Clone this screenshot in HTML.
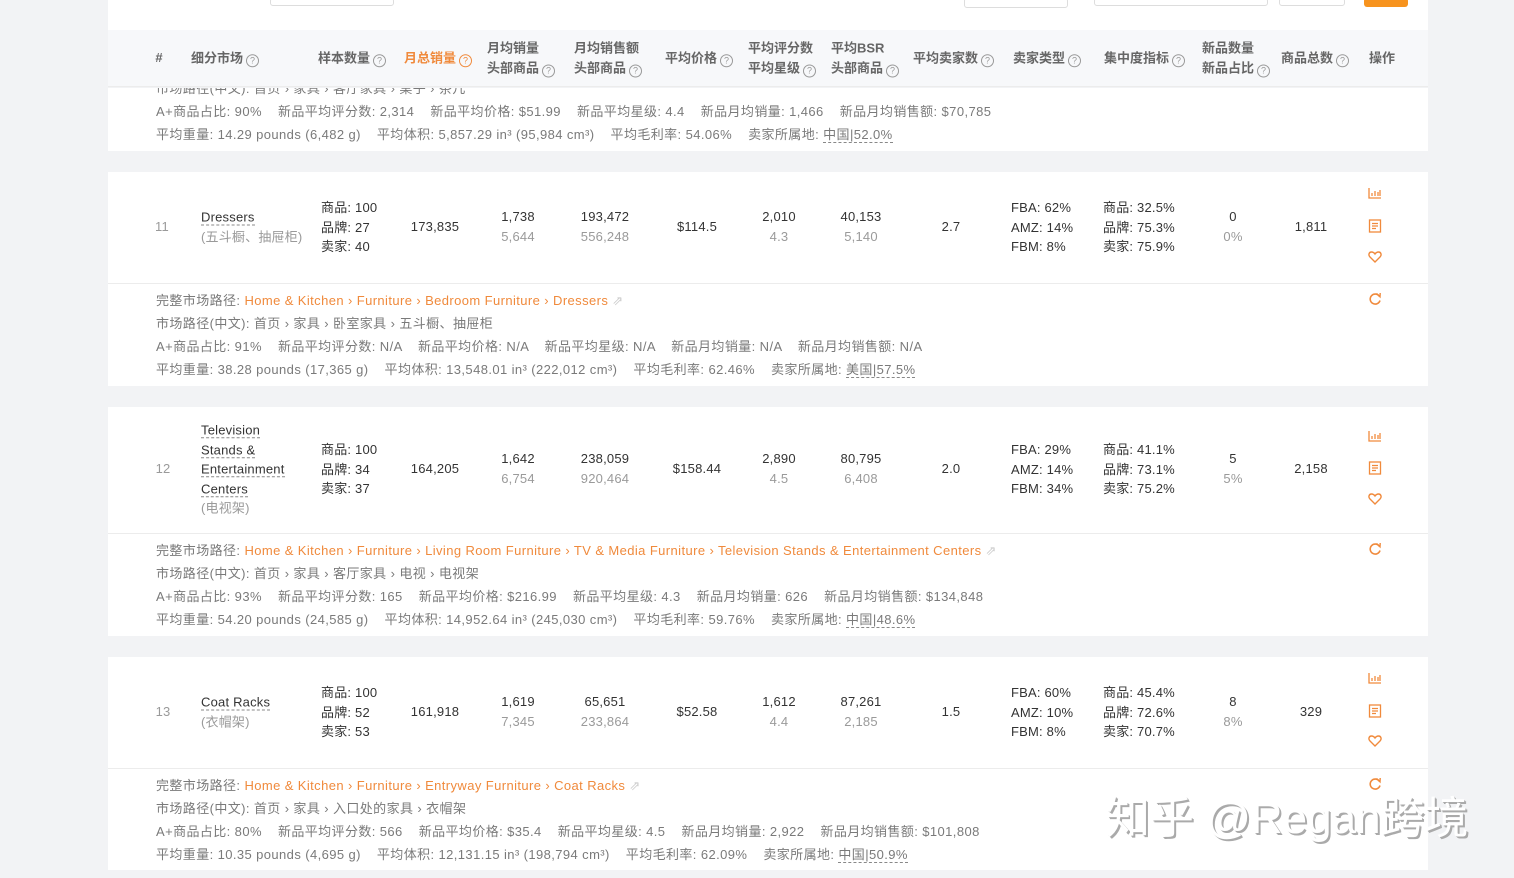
<!DOCTYPE html>
<html><head><meta charset="utf-8">
<style>
*{margin:0;padding:0;box-sizing:border-box}
body{width:1514px;height:878px;overflow:hidden;background:#f2f3f5;font-family:"Liberation Sans","Noto Sans CJK SC",sans-serif;font-size:13px;color:#333;position:relative;letter-spacing:0.2px}
.card{position:absolute;left:108px;width:1320px;background:#fff}
.a{position:absolute;white-space:nowrap}
.c{position:absolute;white-space:nowrap;transform:translate(-50%,-50%);text-align:center;line-height:20px}
.l{position:absolute;white-space:nowrap;transform:translateY(-50%);line-height:19.5px}
.g{color:#9a9a9a}
.h{color:#666;font-weight:bold;font-size:13px;letter-spacing:0}
.q{display:inline-block;width:13px;height:13px;border:1px solid #999;border-radius:50%;font-size:9px;line-height:11px;text-align:center;color:#999;font-weight:normal;vertical-align:-1px;margin-left:3px}
.o{color:#f08a3c}
.d{color:#7a7a7a;line-height:23px;letter-spacing:0.4px}
.u{border-bottom:1px dashed #888}
.hr{position:absolute;left:0;width:1320px;height:1px;background:#ececec}
.ic{position:absolute;left:1368px}
</style></head><body>
<div class="card" style="top:0;height:30px"></div>
<div class="a" style="left:270px;top:-2px;width:124px;height:8px;border:1px solid #ddd;border-radius:3px;background:#fff"></div>
<div class="a" style="left:964px;top:-2px;width:104px;height:10px;border:1px solid #ddd;border-radius:3px;background:#fff"></div>
<div class="a" style="left:1094px;top:-2px;width:174px;height:8px;border:1px solid #ddd;border-radius:3px;background:#fff"></div>
<div class="a" style="left:1279px;top:-2px;width:66px;height:8px;border:1px solid #ddd;border-radius:3px;background:#fff"></div>
<div class="a" style="left:1364px;top:-2px;width:44px;height:9px;border-radius:3px;background:#f7931e"></div>
<div class="card" style="top:30px;height:57px;background:#f7f8fa;border-bottom:1px solid #ececec"></div>
<div class="c h" style="left:159px;top:58px">#</div>
<div class="l h" style="left:191px;top:58px">细分市场<span class="q">?</span></div>
<div class="l h" style="left:318px;top:58px">样本数量<span class="q">?</span></div>
<div class="l h" style="left:404px;top:58px;color:#f08a3c">月总销量<span class="q" style="border-color:#f08a3c;color:#f08a3c">?</span></div>
<div class="l h" style="left:487px;top:58px">月均销量<br>头部商品<span class="q">?</span></div>
<div class="l h" style="left:574px;top:58px">月均销售额<br>头部商品<span class="q">?</span></div>
<div class="l h" style="left:665px;top:58px">平均价格<span class="q">?</span></div>
<div class="l h" style="left:748px;top:58px">平均评分数<br>平均星级<span class="q">?</span></div>
<div class="l h" style="left:831px;top:58px">平均BSR<br>头部商品<span class="q">?</span></div>
<div class="l h" style="left:913px;top:58px">平均卖家数<span class="q">?</span></div>
<div class="l h" style="left:1013px;top:58px">卖家类型<span class="q">?</span></div>
<div class="l h" style="left:1104px;top:58px">集中度指标<span class="q">?</span></div>
<div class="l h" style="left:1202px;top:58px">新品数量<br>新品占比<span class="q">?</span></div>
<div class="l h" style="left:1281px;top:58px">商品总数<span class="q">?</span></div>
<div class="l h" style="left:1369px;top:58px">操作</div>

<div class="card" style="top:88px;height:63px;overflow:hidden">
 <div class="a d" style="left:48px;top:-11px">市场路径(中文): 首页 › 家具 › 客厅家具 › 桌子 › 茶几</div>
 <div class="a d" style="left:48px;top:12px">A+商品占比: 90% &nbsp;&nbsp; 新品平均评分数: 2,314 &nbsp;&nbsp; 新品平均价格: $51.99 &nbsp;&nbsp; 新品平均星级: 4.4 &nbsp;&nbsp; 新品月均销量: 1,466 &nbsp;&nbsp; 新品月均销售额: $70,785</div>
 <div class="a d" style="left:48px;top:35px">平均重量: 14.29 pounds (6,482 g) &nbsp;&nbsp; 平均体积: 5,857.29 in³ (95,984 cm³) &nbsp;&nbsp; 平均毛利率: 54.06% &nbsp;&nbsp; 卖家所属地: <span class="u">中国|52.0%</span></div>
</div>

<div class="card" style="top:172px;height:214px"><div class="hr" style="top:111px"></div></div>
<div class="c g" style="left:162px;top:227px">11</div>
<div class="l" style="left:201px;top:227px"><span class="u">Dressers</span><br><span class="g">(五斗橱、抽屉柜)</span></div>
<div class="l" style="left:321px;top:227px">商品: 100<br>品牌: 27<br>卖家: 40</div>
<div class="c" style="left:435px;top:227px">173,835</div>
<div class="c" style="left:518px;top:227px">1,738<br><span class="g">5,644</span></div>
<div class="c" style="left:605px;top:227px">193,472<br><span class="g">556,248</span></div>
<div class="c" style="left:697px;top:227px">$114.5</div>
<div class="c" style="left:779px;top:227px">2,010<br><span class="g">4.3</span></div>
<div class="c" style="left:861px;top:227px">40,153<br><span class="g">5,140</span></div>
<div class="c" style="left:951px;top:227px">2.7</div>
<div class="l" style="left:1011px;top:227px">FBA: 62%<br>AMZ: 14%<br>FBM: 8%</div>
<div class="l" style="left:1103px;top:227px">商品: 32.5%<br>品牌: 75.3%<br>卖家: 75.9%</div>
<div class="c" style="left:1233px;top:227px">0<br><span class="g">0%</span></div>
<div class="c" style="left:1311px;top:227px">1,811</div>
<div class="a d" style="left:156px;top:289px">完整市场路径: <span class="o">Home &amp; Kitchen › Furniture › Bedroom Furniture › Dressers</span> <span style="color:#ccc">⇗</span></div>
<div class="a d" style="left:156px;top:312px">市场路径(中文): 首页 › 家具 › 卧室家具 › 五斗橱、抽屉柜</div>
<div class="a d" style="left:156px;top:335px">A+商品占比: 91% &nbsp;&nbsp; 新品平均评分数: N/A &nbsp;&nbsp; 新品平均价格: N/A &nbsp;&nbsp; 新品平均星级: N/A &nbsp;&nbsp; 新品月均销量: N/A &nbsp;&nbsp; 新品月均销售额: N/A</div>
<div class="a d" style="left:156px;top:358px">平均重量: 38.28 pounds (17,365 g) &nbsp;&nbsp; 平均体积: 13,548.01 in³ (222,012 cm³) &nbsp;&nbsp; 平均毛利率: 62.46% &nbsp;&nbsp; 卖家所属地: <span class="u">美国|57.5%</span></div>

<div class="card" style="top:407px;height:229px"><div class="hr" style="top:126px"></div></div>
<div class="c g" style="left:163px;top:469px">12</div>
<div class="l" style="left:201px;top:469px"><span class="u">Television</span><br><span class="u">Stands &amp;</span><br><span class="u">Entertainment</span><br><span class="u">Centers</span><br><span class="g">(电视架)</span></div>
<div class="l" style="left:321px;top:469px">商品: 100<br>品牌: 34<br>卖家: 37</div>
<div class="c" style="left:435px;top:469px">164,205</div>
<div class="c" style="left:518px;top:469px">1,642<br><span class="g">6,754</span></div>
<div class="c" style="left:605px;top:469px">238,059<br><span class="g">920,464</span></div>
<div class="c" style="left:697px;top:469px">$158.44</div>
<div class="c" style="left:779px;top:469px">2,890<br><span class="g">4.5</span></div>
<div class="c" style="left:861px;top:469px">80,795<br><span class="g">6,408</span></div>
<div class="c" style="left:951px;top:469px">2.0</div>
<div class="l" style="left:1011px;top:469px">FBA: 29%<br>AMZ: 14%<br>FBM: 34%</div>
<div class="l" style="left:1103px;top:469px">商品: 41.1%<br>品牌: 73.1%<br>卖家: 75.2%</div>
<div class="c" style="left:1233px;top:469px">5<br><span class="g">5%</span></div>
<div class="c" style="left:1311px;top:469px">2,158</div>
<div class="a d" style="left:156px;top:539px">完整市场路径: <span class="o">Home &amp; Kitchen › Furniture › Living Room Furniture › TV &amp; Media Furniture › Television Stands &amp; Entertainment Centers</span> <span style="color:#ccc">⇗</span></div>
<div class="a d" style="left:156px;top:562px">市场路径(中文): 首页 › 家具 › 客厅家具 › 电视 › 电视架</div>
<div class="a d" style="left:156px;top:585px">A+商品占比: 93% &nbsp;&nbsp; 新品平均评分数: 165 &nbsp;&nbsp; 新品平均价格: $216.99 &nbsp;&nbsp; 新品平均星级: 4.3 &nbsp;&nbsp; 新品月均销量: 626 &nbsp;&nbsp; 新品月均销售额: $134,848</div>
<div class="a d" style="left:156px;top:608px">平均重量: 54.20 pounds (24,585 g) &nbsp;&nbsp; 平均体积: 14,952.64 in³ (245,030 cm³) &nbsp;&nbsp; 平均毛利率: 59.76% &nbsp;&nbsp; 卖家所属地: <span class="u">中国|48.6%</span></div>

<div class="card" style="top:657px;height:213px"><div class="hr" style="top:111px"></div></div>
<div class="c g" style="left:163px;top:712px">13</div>
<div class="l" style="left:201px;top:712px"><span class="u">Coat Racks</span><br><span class="g">(衣帽架)</span></div>
<div class="l" style="left:321px;top:712px">商品: 100<br>品牌: 52<br>卖家: 53</div>
<div class="c" style="left:435px;top:712px">161,918</div>
<div class="c" style="left:518px;top:712px">1,619<br><span class="g">7,345</span></div>
<div class="c" style="left:605px;top:712px">65,651<br><span class="g">233,864</span></div>
<div class="c" style="left:697px;top:712px">$52.58</div>
<div class="c" style="left:779px;top:712px">1,612<br><span class="g">4.4</span></div>
<div class="c" style="left:861px;top:712px">87,261<br><span class="g">2,185</span></div>
<div class="c" style="left:951px;top:712px">1.5</div>
<div class="l" style="left:1011px;top:712px">FBA: 60%<br>AMZ: 10%<br>FBM: 8%</div>
<div class="l" style="left:1103px;top:712px">商品: 45.4%<br>品牌: 72.6%<br>卖家: 70.7%</div>
<div class="c" style="left:1233px;top:712px">8<br><span class="g">8%</span></div>
<div class="c" style="left:1311px;top:712px">329</div>
<div class="a d" style="left:156px;top:774px">完整市场路径: <span class="o">Home &amp; Kitchen › Furniture › Entryway Furniture › Coat Racks</span> <span style="color:#ccc">⇗</span></div>
<div class="a d" style="left:156px;top:797px">市场路径(中文): 首页 › 家具 › 入口处的家具 › 衣帽架</div>
<div class="a d" style="left:156px;top:820px">A+商品占比: 80% &nbsp;&nbsp; 新品平均评分数: 566 &nbsp;&nbsp; 新品平均价格: $35.4 &nbsp;&nbsp; 新品平均星级: 4.5 &nbsp;&nbsp; 新品月均销量: 2,922 &nbsp;&nbsp; 新品月均销售额: $101,808</div>
<div class="a d" style="left:156px;top:843px">平均重量: 10.35 pounds (4,695 g) &nbsp;&nbsp; 平均体积: 12,131.15 in³ (198,794 cm³) &nbsp;&nbsp; 平均毛利率: 62.09% &nbsp;&nbsp; 卖家所属地: <span class="u">中国|50.9%</span></div>

<svg width="0" height="0" style="position:absolute"><defs>
<g id="bar" fill="none" stroke="#f08a3c" stroke-width="1.3"><path d="M1 1V11H13M4 9V6M7 9V4M10 9V5M12 9V3"/></g>
<g id="doc" fill="none" stroke="#f08a3c" stroke-width="1.3"><rect x="1.5" y="1" width="11" height="12"/><path d="M4 4.5H10M4 7H10M4 9.5H8"/></g>
<g id="heart" fill="none" stroke="#f08a3c" stroke-width="1.4"><path d="M7 12L2 7C0 5 1 2 3.5 2C5 2 6.3 3 7 4C7.7 3 9 2 10.5 2C13 2 14 5 12 7Z"/></g>
<g id="ref" fill="none" stroke="#f08a3c" stroke-width="1.6"><path d="M11.5 4.5A5 5 0 1 0 12 8.5"/><path d="M8.5 1.5L12 4.8L12.2 1" stroke-width="1.4"/></g>
</defs></svg>
<svg class="ic" style="top:187px" width="14" height="14"><use href="#bar"/></svg>
<svg class="ic" style="top:219px" width="14" height="14"><use href="#doc"/></svg>
<svg class="ic" style="top:250px" width="14" height="14"><use href="#heart"/></svg>
<svg class="ic" style="top:292px" width="14" height="14"><use href="#ref"/></svg>
<svg class="ic" style="top:430px" width="14" height="14"><use href="#bar"/></svg>
<svg class="ic" style="top:461px" width="14" height="14"><use href="#doc"/></svg>
<svg class="ic" style="top:492px" width="14" height="14"><use href="#heart"/></svg>
<svg class="ic" style="top:542px" width="14" height="14"><use href="#ref"/></svg>
<svg class="ic" style="top:672px" width="14" height="14"><use href="#bar"/></svg>
<svg class="ic" style="top:704px" width="14" height="14"><use href="#doc"/></svg>
<svg class="ic" style="top:734px" width="14" height="14"><use href="#heart"/></svg>
<svg class="ic" style="top:777px" width="14" height="14"><use href="#ref"/></svg>

<div class="a" style="left:1106px;top:782px;font-size:44px;color:#fff;text-shadow:2px 2px 0 #aaa,1px 1px 0 #bbb;letter-spacing:0px">知乎 @Regan跨境</div>
</body></html>
